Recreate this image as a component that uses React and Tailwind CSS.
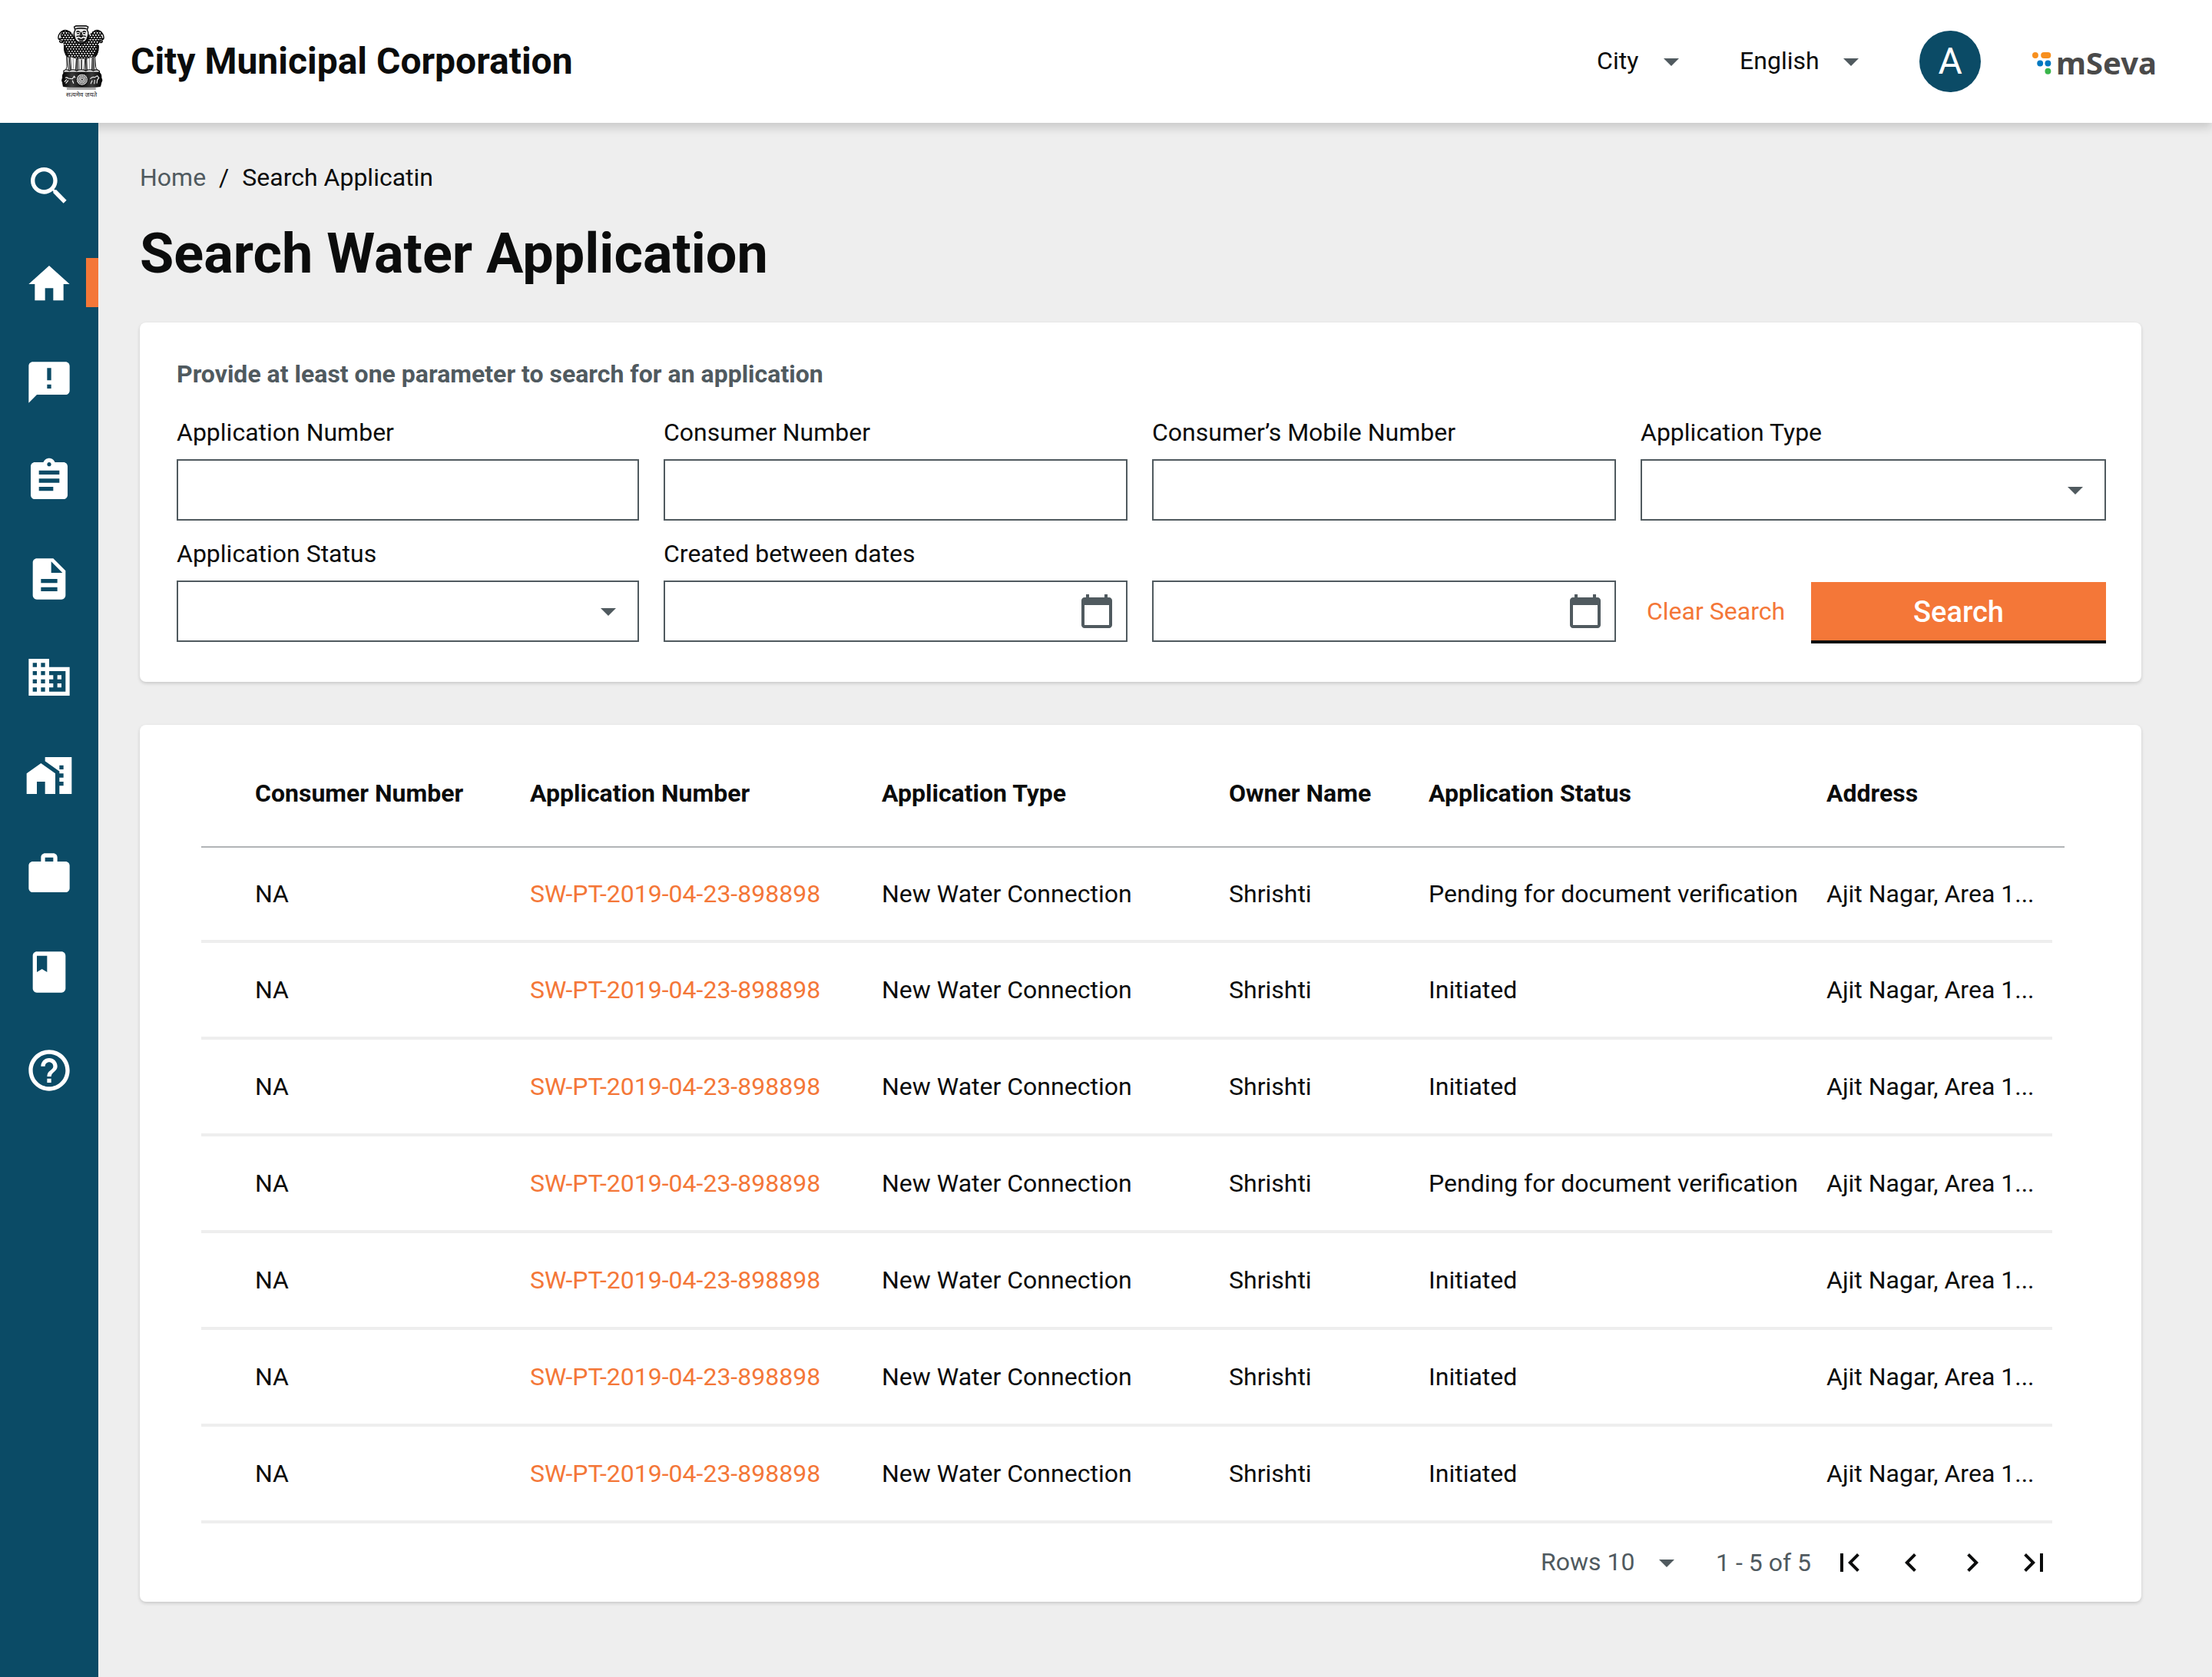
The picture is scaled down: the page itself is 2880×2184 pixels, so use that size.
import {
  MdSearch, MdHome, MdAnnouncement, MdAssignment, MdDescription, MdBusiness, MdHomeWork,
  MdWork, MdClass, MdHelpOutline, MdArrowDropDown, MdCalendarToday, MdFirstPage,
  MdChevronLeft, MdChevronRight, MdLastPage,
} from "react-icons/md";

const NAV = [
  { label: "Search", Icon: MdSearch },
  { label: "Home", Icon: MdHome, active: true },
  { label: "Complaints", Icon: MdAnnouncement },
  { label: "Assignments", Icon: MdAssignment },
  { label: "Documents", Icon: MdDescription },
  { label: "Business", Icon: MdBusiness },
  { label: "Property", Icon: MdHomeWork },
  { label: "Trade", Icon: MdWork },
  { label: "Records", Icon: MdClass },
  { label: "Help", Icon: MdHelpOutline },
];

const PENDING = "Pending for document verification";
const STATUSES = [PENDING, "Initiated", "Initiated", PENDING, "Initiated", "Initiated", "Initiated"];

const CURLS = [];
for (let r = 0; r < 13; r += 1) {
  for (let c = 0; c < 17; c += 1) {
    const x = 78 + c * 11 + (r % 2) * 5;
    const y = 54 + r * 9;
    CURLS.push(`M${x} ${y}q3 11 10 3`);
  }
}

function Emblem() {
  return (
    <svg viewBox="76 34 184 286" className="h-[95px] w-[61px]" role="img" aria-label="State Emblem of India">
      <defs>
        <clipPath id="mane">
          <path d="M86 62Q98 46 116 52L134 64Q140 92 170 100Q200 92 206 64L222 52Q244 48 252 64L248 100Q236 96 238 118Q238 144 224 160L206 156L190 168L168 164L150 168L134 158L114 160Q100 146 100 118Q102 98 90 102Z" />
        </clipPath>
        <linearGradient id="drum" x1="0" x2="1">
          <stop offset="0" stopColor="#000" />
          <stop offset=".25" stopColor="#3a3a3a" />
          <stop offset=".5" stopColor="#111" />
          <stop offset=".75" stopColor="#3a3a3a" />
          <stop offset="1" stopColor="#000" />
        </linearGradient>
      </defs>
      <g clipPath="url(#mane)">
        <rect x="76" y="40" width="184" height="130" fill="#fff" />
        <path d={CURLS.join("")} fill="none" stroke="#000" strokeWidth="5" />
      </g>
      <path d="M100 112Q98 144 114 158L122 150Q108 138 108 112ZM238 112Q240 144 224 158L214 150Q230 138 230 112Z" fill="#111" />
      <path d="M140 70Q144 100 170 106Q196 100 200 70" fill="none" stroke="#000" strokeWidth="6" />
      <path d="M84 66Q96 50 112 54Q124 58 128 70M84 66Q76 78 80 88L86 90L84 98Q92 106 98 98L104 92M92 74l8 3M82 86l10-2" fill="none" stroke="#000" strokeWidth="4" />
      <path d="M252 66Q240 50 226 54Q214 58 210 70M252 66Q260 78 256 88L250 90L252 98Q246 106 240 98L234 92M246 74l-8 3M256 86l-10-2" fill="none" stroke="#000" strokeWidth="4" />
      <path d="M141 40L148 36H188L196 40L192 52Q200 62 194 78Q190 100 168 104Q146 100 142 78Q138 62 145 52Z" fill="#e8e8e8" stroke="#000" strokeWidth="4" />
      <path d="M146 48Q168 42 190 48M150 60Q156 54 163 61M174 61Q181 54 187 60M152 66h9M176 66h9M168 60L164 76H173L168 60M150 78Q160 72 168 80Q177 72 187 78M154 86Q168 96 183 86M160 94L168 99L177 94" fill="none" stroke="#000" strokeWidth="4" />
      <path d="M158 82Q168 92 179 82V88Q168 97 158 88Z" fill="#111" />
      <path d="M112 154L120 212H104Q110 206 112 198ZM126 156L130 214H146L150 164ZM156 164L158 214H180L184 164ZM190 164L192 214H210L212 158ZM222 156L220 212H236Q228 206 226 198Z" fill="#f4f4f4" stroke="#222" strokeWidth="3" />
      <path d="M121 158L125 208M151 166L152 212M170 168V208M187 166V212M216 158L215 210" fill="none" stroke="#111" strokeWidth="4" />
      <path d="M137 162L138 204M161 170L162 206M201 162L201 204" fill="none" stroke="#777" strokeWidth="2" />
      <path d="M100 212Q108 204 122 212Q136 204 150 212Q168 204 188 212Q202 204 216 212Q230 204 240 213V221H100Z" fill="#ddd" stroke="#000" strokeWidth="3.5" />
      <path d="M104 218H240Q250 226 248 240Q254 250 248 258L244 274Q172 284 98 274L95 258Q90 250 95 240Q92 226 104 218Z" fill="url(#drum)" stroke="#000" strokeWidth="2" />
      <circle cx="172" cy="247" r="23" fill="#ddd" stroke="#000" strokeWidth="3" />
      <circle cx="172" cy="247" r="16" fill="none" stroke="#444" strokeWidth="6" strokeDasharray="3 2.5" />
      <circle cx="172" cy="247" r="9" fill="none" stroke="#555" strokeWidth="5" strokeDasharray="2 1.5" />
      <circle cx="172" cy="247" r="3.5" fill="#222" />
      <path d="M106 240Q112 236 118 242L134 244L141 234L145 240M134 250L139 262M118 250L108 262M112 246L103 256" fill="none" stroke="#fff" strokeWidth="3.5" />
      <path d="M204 244Q212 234 222 238L232 232L238 240L232 248L230 262M222 248L220 264M212 250L206 264" fill="none" stroke="#eee" strokeWidth="3.5" />
      <rect x="112" y="277" width="114" height="10" fill="#aaa" />
      <text x="170" y="315" fontSize="25" textAnchor="middle" fill="#222" fontFamily='"Noto Sans", "Noto Sans Devanagari", sans-serif'>सत्यमेव जयते</text>
    </svg>
  );
}

function ProductLogo() {
  return (
    <div className="flex items-center gap-1.5 pt-1" aria-label="mSeva">
      <svg viewBox="84 84 76 88" className="h-[29px] w-[25px]" aria-hidden="true">
        <circle cx="96" cy="96" r="12" fill="#f78f1e" />
        <rect x="118" y="84" width="40" height="24" rx="12" fill="#f78f1e" />
        <circle cx="115" cy="128" r="12" fill="#0079c1" />
        <circle cx="146" cy="128" r="12" fill="#0079c1" />
        <circle cx="146" cy="159" r="12" fill="#39b54a" />
      </svg>
      <span className="font-['Noto_Sans',sans-serif] text-[40px] leading-10 font-bold text-[#4a4a4a]">mSeva</span>
    </div>
  );
}

function PlainSelect({ label, value, className }) {
  return (
    <div className={`relative flex items-center ${className}`}>
      <select aria-label={label} className="w-full appearance-none bg-transparent pr-12 pb-0.5 leading-10">
        <option>{value}</option>
      </select>
      <MdArrowDropDown className="pointer-events-none absolute right-0 size-12 text-[#505a5f]" />
    </div>
  );
}

const BOX = "h-20 w-full appearance-none rounded-none border-2 border-[#505a5f] bg-white px-4";

function Field({ id, label, kind = "text", ariaLabel }) {
  return (
    <div className="flex flex-col gap-[15px]">
      <label htmlFor={id} className="h-10 leading-10 whitespace-nowrap">{label}</label>
      <div className="relative flex items-center">
        {kind === "select" ? (
          <>
            <select id={id} className={BOX}>
              <option></option>
            </select>
            <MdArrowDropDown className="pointer-events-none absolute right-4 size-12 text-[#505a5f]" />
          </>
        ) : (
          <input id={id} type="text" aria-label={ariaLabel} className={BOX} />
        )}
        {kind === "date" && (
          <button type="button" aria-label="Open calendar" className="absolute right-4 text-[#505a5f]">
            <MdCalendarToday className="size-12" />
          </button>
        )}
      </div>
    </div>
  );
}

const CARD = "rounded-lg bg-white shadow-[0_2px_4px_rgba(0,0,0,0.16)]";

export default function App() {
  return (
    <div className="flex min-h-screen flex-col bg-[#eeeeee] font-[Roboto,sans-serif] text-[32px] leading-10 text-[#0b0c0c]">
      <header className="flex h-40 items-center bg-white pr-[72px] pl-[75px] shadow-[0_6px_12px_rgba(0,0,0,0.16)]">
        <Emblem />
        <span className="ml-[34px] text-5xl leading-14 font-bold">City Municipal Corporation</span>
        <div className="ml-auto flex items-center">
          <PlainSelect label="City" value="City" className="w-[121px]" />
          <PlainSelect label="Language" value="English" className="ml-[65px] w-[169px]" />
          <button type="button" aria-label="Account" className="ml-[65px] size-20 rounded-full bg-[#0b4b66] text-5xl text-white">A</button>
          <div className="ml-[67px]">
            <ProductLogo />
          </div>
        </div>
      </header>

      <div className="flex flex-1">
        <nav aria-label="Main" className="relative w-32 shrink-0 bg-[#0b4b66] pt-[18px]">
          {NAV.map(({ label, Icon, active }) => (
            <a key={label} href="#" aria-label={label} className="relative flex h-32 items-center justify-center text-white">
              <Icon className="size-16" />
              {active && <span className="absolute top-[30px] right-0 h-16 w-4 bg-[#f47738]" />}
            </a>
          ))}
        </nav>

        <main className="min-w-0 flex-1 pt-[51px] pr-[92px] pb-24 pl-[54px]">
          <nav aria-label="Breadcrumb" className="flex gap-[17px]">
            <a href="#" className="text-[#505a5f]">Home</a>
            <span>/</span>
            <span>Search Applicatin</span>
          </nav>
          <h1 className="mt-9 mb-[45px] text-7xl leading-[88px] font-bold">Search Water Application</h1>

          <form className={`${CARD} pt-[47px] pr-[46px] pb-[50px] pl-12`}>
            <h2 className="font-bold text-[#505a5f]">Provide at least one parameter to search for an application</h2>
            <div className="mt-9 grid grid-cols-[602fr_604fr_604fr_606fr] items-start gap-x-8 gap-y-[23px]">
              <Field id="application-number" label="Application Number" />
              <Field id="consumer-number" label="Consumer Number" />
              <Field id="mobile-number" label="Consumer’s Mobile Number" />
              <Field id="application-type" label="Application Type" kind="select" />
              <Field id="application-status" label="Application Status" kind="select" />
              <Field id="created-from" label="Created between dates" kind="date" />
              <Field id="created-to" kind="date" ariaLabel="Created before date" />
              <div className="flex items-start justify-between pt-[57px] pl-2">
                <button type="reset" className="h-19 text-[#f47738]">Clear Search</button>
                <button type="button" className="h-20 w-96 border-b-4 border-[#0b0c0c] bg-[#f47738] pt-0.5 text-[38px] font-medium text-white">Search</button>
              </div>
            </div>
          </form>

          <section className={`${CARD} mt-14 pr-[100px] pl-20`}>
            <table className="w-full table-fixed border-separate border-spacing-0 text-left whitespace-nowrap">
              <colgroup>
                <col className="w-[428px]" />
                <col className="w-[458px]" />
                <col className="w-[452px]" />
                <col className="w-[260px]" />
                <col className="w-[518px]" />
                <col className="w-[294px]" />
                <col className="w-4" />
              </colgroup>
              <thead>
                <tr className="h-40 *:border-b-2 *:border-[#b1b4b6] *:pt-5">
                  <th className="pl-[70px]">Consumer Number</th>
                  <th>Application Number</th>
                  <th>Application Type</th>
                  <th>Owner Name</th>
                  <th>Application Status</th>
                  <th colSpan={2}>Address</th>
                </tr>
              </thead>
              <tbody>
                {STATUSES.map((status, i) => (
                  <tr key={i} className="h-[126px] *:border-b-4 *:border-[#eeeeee] first:h-[124px]">
                    <td className="pl-[70px]">NA</td>
                    <td><a href="#" className="text-[#f47738]">SW-PT-2019-04-23-898898</a></td>
                    <td>New Water Connection</td>
                    <td>Shrishti</td>
                    <td>{status}</td>
                    <td>Ajit Nagar, Area 1...</td>
                  </tr>
                ))}
              </tbody>
            </table>
            <div className="flex h-[102px] items-center justify-end pr-4 text-[#505a5f]">
              <PlainSelect label="Rows per page" value="Rows 10" className="w-[188px]" />
              <span className="mr-[26px] ml-10">1 - 5 of 5</span>
              <div className="flex gap-8 text-[#0b0c0c]">
                <button type="button" aria-label="First page"><MdFirstPage className="size-12" /></button>
                <button type="button" aria-label="Previous page"><MdChevronLeft className="size-12" /></button>
                <button type="button" aria-label="Next page"><MdChevronRight className="size-12" /></button>
                <button type="button" aria-label="Last page"><MdLastPage className="size-12" /></button>
              </div>
            </div>
          </section>
        </main>
      </div>
    </div>
  );
}
